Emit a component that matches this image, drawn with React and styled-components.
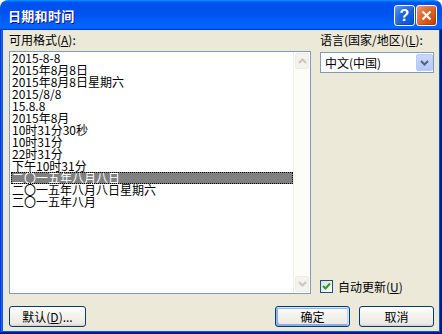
import React from 'react';
import styled, { createGlobalStyle } from 'styled-components';

const Global = createGlobalStyle`
  html, body { margin: 0; padding: 0; background: #ffffff; }
  body { font-family: "Noto Sans CJK SC", "Noto Sans", sans-serif; font-size: 12px; color: #000; }
  #root { width: 442px; height: 334px; }
`;

const Window = styled.div`
  width: 442px;
  height: 334px;
  display: flex;
  flex-direction: column;
  overflow: hidden;
  border-radius: 8px 8px 0 0;
`;

const TitleBar = styled.div`
  height: 30px;
  flex: none;
  display: flex;
  align-items: center;
  padding: 0 5px 0 8px;
  box-sizing: border-box;
  background: linear-gradient(180deg, #0997ff, #0053ee 8%, #0050ee 40%, #06f 88%, #06f 93%, #005bff 95%, #003dd7 96%, #003dd7);
`;

const Title = styled.div`
  flex: 1;
  color: #fff;
  font-weight: bold;
  font-size: 13px;
  line-height: 13px;
  letter-spacing: 0.3px;
  text-shadow: 1px 1px #0f1089;
`;

const TitleButtons = styled.div`
  display: flex;
  gap: 1px;
  margin-top: 1px;
`;

const CaptionButton = styled.div`
  width: 21px;
  height: 21px;
  box-sizing: border-box;
  border: 1px solid #fff;
  border-radius: 3px;
  display: flex;
  align-items: center;
  justify-content: center;
  color: #fff;
  font-family: "Liberation Sans", Arial, sans-serif;
  font-weight: bold;
  font-size: 16px;
  background: ${p => p.$close
    ? 'radial-gradient(circle at 90% 90%, #cc4600 0%, #dc6527 55%, #e5825a 80%, #f1a186 100%)'
    : 'radial-gradient(circle at 90% 90%, #0054e9 0%, #2263d5 55%, #4282f2 80%, #6fa1f6 100%)'};
  box-shadow: inset -1px -1px 1px rgba(0,0,0,0.2);
`;

const Frame = styled.div`
  flex: 1;
  display: flex;
  padding: 0 3px 3px 3px;
  background: #0855dd;
  box-shadow: inset -1px -1px #00138c, inset 1px 0 #0831d9, inset -2px -2px #001ea0, inset 2px 0 #166aee;
`;

const Client = styled.div`
  flex: 1;
  display: flex;
  flex-direction: column;
  background: #ece9d8;
  padding: 4px 5px 4px 6px;
`;

const Main = styled.div`
  flex: 1;
  display: flex;
  gap: 9px;
  min-height: 0;
`;

const Column = styled.div`
  width: ${p => p.$w}px;
  display: flex;
  flex-direction: column;
`;

const Label = styled.div`
  height: 12px;
  line-height: 12px;
  margin-bottom: 5px;
  white-space: nowrap;
`;

const ListBox = styled.div`
  flex: 1;
  display: flex;
  border: 1px solid #7f9db9;
  background: #fff;
  min-height: 0;
`;

const Items = styled.div`
  flex: 1;
  padding: 0 0 0 1px;
`;

const Row = styled.div`
  height: 12px;
  line-height: 12px;
  padding-left: 1px;
  white-space: nowrap;
  color: ${p => (p.$sel ? '#fff' : '#000')};
  background: ${p => (p.$sel ? '#808080' : 'transparent')};
  outline: ${p => (p.$sel ? '1px dotted #000' : 'none')};
  outline-offset: -1px;
`;

const ScrollBar = styled.div`
  width: 17px;
  box-sizing: border-box;
  padding: 1px;
  display: flex;
  flex-direction: column;
  justify-content: space-between;
  background: #fdfdf8;
  border-left: 1px solid #f0efe6;
`;

const ScrollBtn = styled.div`
  height: 16px;
  box-sizing: border-box;
  border: 1px solid #eeede5;
  border-radius: 2px;
  background: #f4f3ee;
  display: flex;
  align-items: center;
  justify-content: center;
`;

const Combo = styled.div`
  height: 21px;
  margin-top: 1px;
  box-sizing: border-box;
  border: 1px solid #7f9db9;
  background: #fff;
  display: flex;
  align-items: center;
  padding-left: 4px;
`;

const ComboText = styled.div`
  flex: 1;
  line-height: 12px;
`;

const DropBtn = styled.div`
  width: 17px;
  align-self: stretch;
  margin: 1px 0 1px 0;
  border-radius: 2px;
  box-sizing: border-box;
  border: 1px solid #b9cbf3;
  background: linear-gradient(180deg, #c9d8fc 0%, #b4c8f8 100%);
  display: flex;
  align-items: center;
  justify-content: center;
`;

const Spacer = styled.div`
  flex: 1;
`;

const CheckRow = styled.div`
  display: flex;
  align-items: center;
  gap: 5px;
  margin-bottom: 1px;
`;

const CheckBox = styled.div`
  width: 13px;
  height: 13px;
  box-sizing: border-box;
  border: 1px solid #1c5180;
  background: linear-gradient(135deg, #dcdcd7 0%, #fff 100%);
  display: flex;
  align-items: center;
  justify-content: center;
`;

const CheckLabel = styled.div`
  line-height: 12px;
`;

const ButtonRow = styled.div`
  margin-top: 12px;
  height: 21px;
  display: flex;
  gap: 9px;
`;

const Button = styled.div`
  width: ${p => p.$w}px;
  height: 21px;
  box-sizing: border-box;
  border: 1px solid #003c74;
  border-radius: 3px;
  background: linear-gradient(180deg, #fff 0%, #f4f3ee 40%, #ecebe6 86%, #d6d0c5 100%);
  display: flex;
  align-items: center;
  justify-content: center;
  line-height: 12px;
  box-shadow: ${p => (p.$focus
    ? 'inset -1px 1px #cee7ff, inset 1px 2px #98b8ea, inset -2px 2px #bcd4f6, inset 1px -1px #89ade4, inset 2px -2px #89ade4'
    : 'none')};
`;

const formats = [
  '2015-8-8',
  '2015年8月8日',
  '2015年8月8日星期六',
  '2015/8/8',
  '15.8.8',
  '2015年8月',
  '10时31分30秒',
  '10时31分',
  '22时31分',
  '下午10时31分',
  '二〇一五年八月八日',
  '二〇一五年八月八日星期六',
  '二〇一五年八月',
];

const Chevron = ({ up, color }) => (
  <svg width="9" height="6" viewBox="0 0 9 6">
    <path
      d={up ? 'M1 5 L4.5 1.5 L8 5' : 'M1 1 L4.5 4.5 L8 1'}
      fill="none"
      stroke={color}
      strokeWidth="2"
    />
  </svg>
);

export default function App() {
  return (
    <>
      <Global />
      <Window>
        <TitleBar>
          <Title>日期和时间</Title>
          <TitleButtons>
            <CaptionButton>?</CaptionButton>
            <CaptionButton $close>
              <svg width="11" height="11" viewBox="0 0 11 11">
                <path d="M1.5 1.5 L9.5 9.5 M9.5 1.5 L1.5 9.5" stroke="#fff" strokeWidth="2.2" />
              </svg>
            </CaptionButton>
          </TitleButtons>
        </TitleBar>
        <Frame>
          <Client>
            <Main>
              <Column $w={302}>
                <Label>可用格式(<u>A</u>):</Label>
                <ListBox>
                  <Items>
                    {formats.map((f, i) => (
                      <Row key={i} $sel={i === 10}>{f}</Row>
                    ))}
                  </Items>
                  <ScrollBar>
                    <ScrollBtn><Chevron up color="#c9c7ba" /></ScrollBtn>
                    <ScrollBtn><Chevron color="#c9c7ba" /></ScrollBtn>
                  </ScrollBar>
                </ListBox>
              </Column>
              <Column $w={114}>
                <Label>语言(国家/地区)(<u>L</u>):</Label>
                <Combo>
                  <ComboText>中文(中国)</ComboText>
                  <DropBtn><Chevron color="#4d6185" /></DropBtn>
                </Combo>
                <Spacer />
                <CheckRow>
                  <CheckBox>
                    <svg width="9" height="9" viewBox="0 0 9 9">
                      <path d="M1 4 L3.5 6.5 L8 1.5" fill="none" stroke="#21a121" strokeWidth="2" />
                    </svg>
                  </CheckBox>
                  <CheckLabel>自动更新(<u>U</u>)</CheckLabel>
                </CheckRow>
              </Column>
            </Main>
            <ButtonRow>
              <Button $w={77}>默认(<u>D</u>)...</Button>
              <Spacer />
              <Button $w={75} $focus>确定</Button>
              <Button $w={75}>取消</Button>
            </ButtonRow>
          </Client>
        </Frame>
      </Window>
    </>
  );
}
